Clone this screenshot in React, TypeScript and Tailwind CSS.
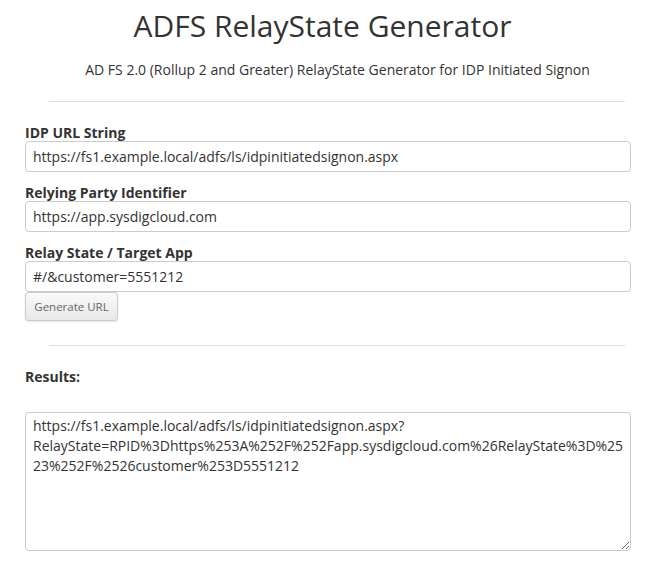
const fieldClass =
  'block w-full h-[31px] px-[7px] border border-[#cccccc] rounded-[4px] text-[14px] text-[#333] bg-white outline-none';

const labelClass = 'block text-[14px] font-bold text-[#333] leading-[16px]';

const resultText =
  'https://fs1.example.local/adfs/ls/idpinitiatedsignon.aspx?RelayState=RPID%3Dhttps%253A%252F%252Fapp.sysdigcloud.com%26RelayState%3D%2523%252F%2526customer%253D5551212';

const App = () => {
  return (
    <div className="w-[645px] h-[564px] bg-white text-[#333] font-['Open_Sans',sans-serif] overflow-hidden">
      <div className="text-center pt-[8px]">
        <h1 className="text-[30px] leading-[36px] font-normal text-[#333]">ADFS RelayState Generator</h1>
        <p className="text-[14px] leading-[20px] mt-[16px] pl-[30px]">
          AD FS 2.0 (Rollup 2 and Greater) RelayState Generator for IDP Initiated Signon
        </p>
      </div>
      <hr className="ml-[49px] w-[576px] mt-[21px] border-t border-[#ddd]" />

      <div className="pl-[25px] pr-[14px] mt-[23px]">
        <label className={labelClass}>IDP URL String</label>
        <input className={fieldClass} defaultValue="https://fs1.example.local/adfs/ls/idpinitiatedsignon.aspx" />

        <label className={labelClass + ' mt-[13px]'}>Relying Party Identifier</label>
        <input className={fieldClass} defaultValue="https://app.sysdigcloud.com" />

        <label className={labelClass + ' mt-[13px]'}>Relay State / Target App</label>
        <input className={fieldClass} defaultValue="#/&customer=5551212" />

        <button className="block h-[29px] w-[93px] text-[11.5px] text-[#666] border border-[#ccc] rounded-[3px] bg-gradient-to-b from-[#fafafa] to-[#e8e8e8] shadow-[0_1px_2px_rgba(0,0,0,0.1)]">
          Generate URL
        </button>
      </div>

      <hr className="ml-[49px] w-[576px] mt-[24px] border-t border-[#ddd]" />

      <div className="pl-[25px] pr-[14px] mt-[23px]">
        <div className={labelClass}>Results:</div>
        <textarea
          className="mt-[27px] block w-full h-[139px] pl-[7px] pr-[3px] py-[3px] border border-[#ccc] rounded-[4px] text-[14px] leading-[20px] text-[#333] outline-none resize-y"
          defaultValue={resultText}
        />
      </div>
    </div>
  );
};

export default App;
